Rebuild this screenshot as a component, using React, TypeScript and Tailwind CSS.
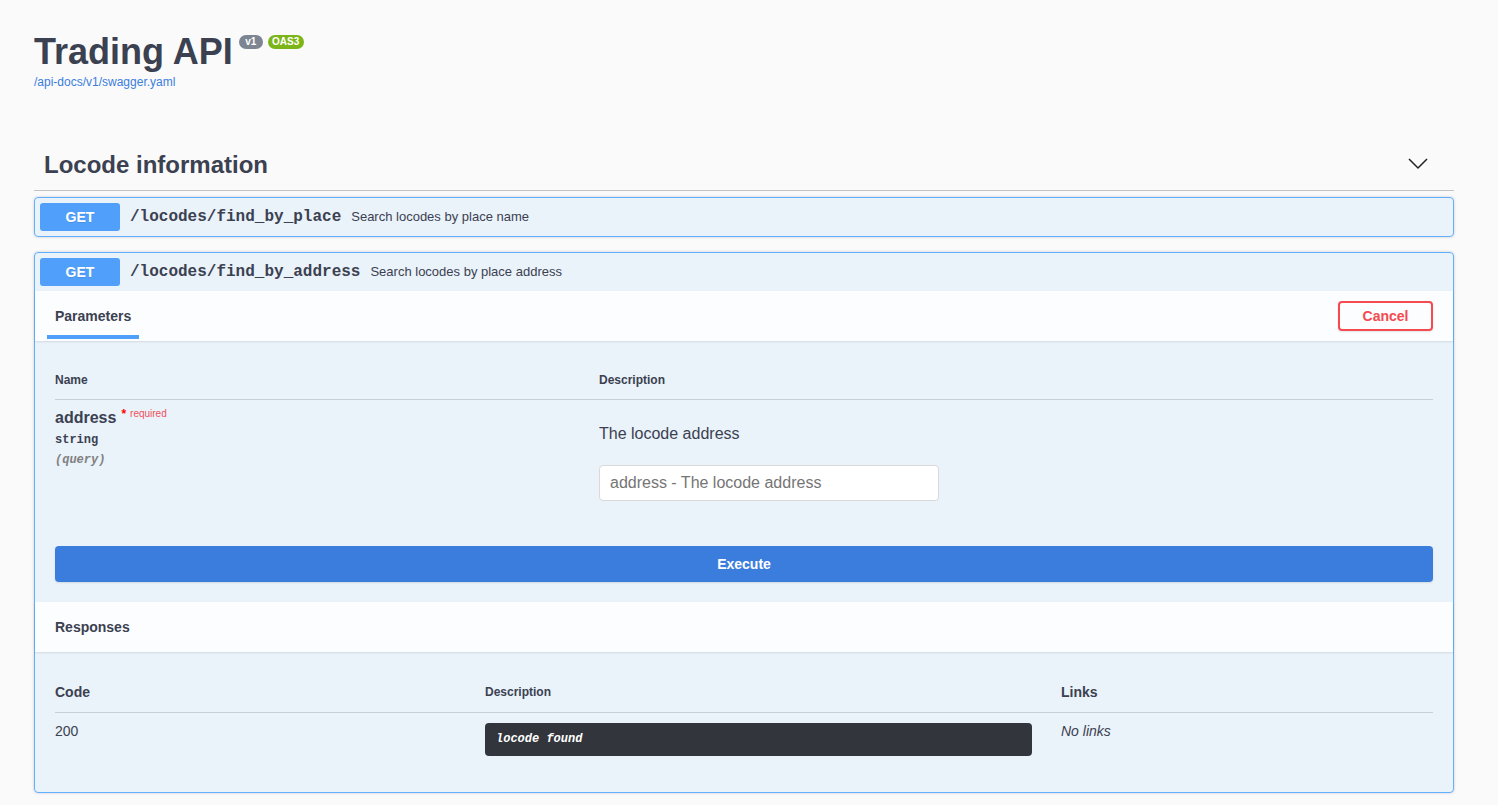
import React from "react";

const sans = "font-['Liberation_Sans',Arial,Helvetica,sans-serif]";
const mono = "font-['Liberation_Mono','Courier_New',monospace]";

function GetBadge() {
  return (
    <span className="inline-block h-[28px] w-[80px] shrink-0 rounded-[3px] bg-[#4f9ffb] text-center text-[14px] font-bold leading-[28px] text-white [text-shadow:0_1px_0_rgba(0,0,0,0.1)]">
      GET
    </span>
  );
}

function OpHeader({ path, desc }: { path: string; desc: string }) {
  return (
    <div className="flex items-center p-[5px]">
      <GetBadge />
      <span className={`${mono} px-[10px] text-[16px] font-bold leading-[20px] text-[#3b4151]`}>{path}</span>
      <span className="text-[13px] leading-[18px] text-[#3b4151]">{desc}</span>
    </div>
  );
}

export default function App() {
  return (
    <div className={`${sans} min-h-[805px] bg-[#fafafa] text-[#3b4151]`}>
      <div className="ml-[34px] w-[1420px] pt-[30px]">
        {/* Title */}
        <div className="flex items-start">
          <h1 className="text-[36px] font-bold leading-[43px] text-[#3b4151]">Trading API</h1>
          <span className="ml-[6px] mt-[5px] h-[14px] w-[24px] rounded-full bg-[#7d8492] text-center text-[10px] font-bold leading-[14px] text-white">
            v1
          </span>
          <span className="ml-[5px] mt-[5px] h-[14px] w-[36px] rounded-full bg-[#7cb518] text-center text-[10px] font-bold leading-[14px] text-white">
            OAS3
          </span>
        </div>
        <div className="mt-[1px] text-[12px] leading-[16px] text-[#3b7ddd]">/api-docs/v1/swagger.yaml</div>

        {/* Section */}
        <section className="mt-[50px]">
          <div className="flex items-center border-b border-[rgba(59,65,81,0.3)] py-[10px] pl-[10px] pr-[26px]">
            <h3 className="flex-1 text-[24px] font-bold leading-[30px] text-[#3b4151]">Locode information</h3>
            <svg width="20" height="20" viewBox="0 0 20 20" className="-mt-[5px]">
              <polyline points="1,6 10,15 19,6" fill="none" stroke="#222" strokeWidth="1.5" />
            </svg>
          </div>

          {/* Opblock 1 */}
          <div className="mt-[6px] rounded-[4px] border border-[#61affe] bg-[rgba(97,175,254,0.1)] shadow-[0_0_3px_rgba(0,0,0,0.19)]">
            <OpHeader path="/locodes/find_by_place" desc="Search locodes by place name" />
          </div>

          {/* Opblock 2 */}
          <div className="mt-[15px] rounded-[4px] border border-[#61affe] bg-[rgba(97,175,254,0.1)] shadow-[0_0_3px_rgba(0,0,0,0.19)]">
            <OpHeader path="/locodes/find_by_address" desc="Search locodes by place address" />

            {/* Parameters tab header */}
            <div className="relative flex h-[50px] items-center justify-between bg-[rgba(255,255,255,0.8)] px-[20px] shadow-[0_1px_2px_rgba(0,0,0,0.1)]">
              <span className="text-[14px] font-bold leading-[18px] text-[#3b4151]">Parameters</span>
              <span className="absolute left-[12px] top-[44px] h-[4px] w-[92px] bg-[#4f9ffb]" />
              <button className="h-[30px] w-[95px] rounded-[4px] border-2 border-[#f44a50] bg-transparent text-[14px] font-bold text-[#f44a50] shadow-[0_1px_2px_rgba(0,0,0,0.1)]">
                Cancel
              </button>
            </div>

            {/* Parameters table */}
            <div className="px-[20px] pt-[20px]">
              <div className="flex border-b border-[rgba(59,65,81,0.2)] py-[12px] text-[12px] font-bold leading-[14px] text-[#3b4151]">
                <div className="w-[544px]">Name</div>
                <div>Description</div>
              </div>
              <div className="flex pb-[5px]">
                <div className="w-[544px] pt-[8px]">
                  <div className="flex items-start">
                    <span className="text-[16px] font-semibold leading-[20px] text-[#3b4151]">address</span>
                    <span className="ml-[5px] text-[12px] font-bold leading-[12px] text-[#ff0000]">*</span>
                    <span className="ml-[4px] text-[10px] leading-[12px] text-[#f0505a]">required</span>
                  </div>
                  <div className={`${mono} mt-[4px] text-[12px] font-bold leading-[16px] text-[#3b4151]`}>string</div>
                  <div className={`${mono} mt-[4px] text-[12px] font-bold italic leading-[16px] text-[#808080]`}>(query)</div>
                </div>
                <div className="pt-[24px]">
                  <div className="text-[16px] leading-[20px] text-[#3b4151]">The locode address</div>
                  <input
                    className="mt-[21px] block h-[36px] w-[340px] rounded-[4px] border border-[#d9d9d9] bg-white px-[10px] text-[16px] text-[#3b4151] outline-none placeholder:text-[#757575]"
                    placeholder="address - The locode address"
                  />
                </div>
              </div>
            </div>

            {/* Execute */}
            <div className="px-[20px] pb-[20px] pt-[40px]">
              <button className="block h-[36px] w-full rounded-[4px] bg-[#3b7ddd] text-[14px] font-bold text-white shadow-[0_1px_2px_rgba(0,0,0,0.1)]">
                Execute
              </button>
            </div>

            {/* Responses header */}
            <div className="flex h-[50px] items-center bg-[rgba(255,255,255,0.8)] px-[20px] shadow-[0_1px_2px_rgba(0,0,0,0.1)]">
              <span className="text-[14px] font-bold leading-[18px] text-[#3b4151]">Responses</span>
            </div>

            {/* Responses table */}
            <div className="px-[20px] pb-[36px] pt-[20px]">
              <div className="flex items-center border-b border-[rgba(59,65,81,0.2)] py-[12px] leading-[16px] text-[#3b4151]">
                <div className="w-[430px] text-[14px] font-bold">Code</div>
                <div className="w-[576px] text-[12px] font-bold">Description</div>
                <div className="text-[14px] font-bold">Links</div>
              </div>
              <div className="flex">
                <div className="w-[430px] pt-[9px] text-[14px] leading-[18px] text-[#3b4151]">200</div>
                <div className="w-[576px] pt-[10px]">
                  <div className={`${mono} h-[33px] w-[547px] rounded-[4px] bg-[#33353d] px-[11px] text-[12px] font-bold italic leading-[33px] text-white`}>
                    locode found
                  </div>
                </div>
                <div className="pt-[9px] text-[14px] italic leading-[18px] text-[#3b4151]">No links</div>
              </div>
            </div>
          </div>
        </section>
      </div>
    </div>
  );
}
